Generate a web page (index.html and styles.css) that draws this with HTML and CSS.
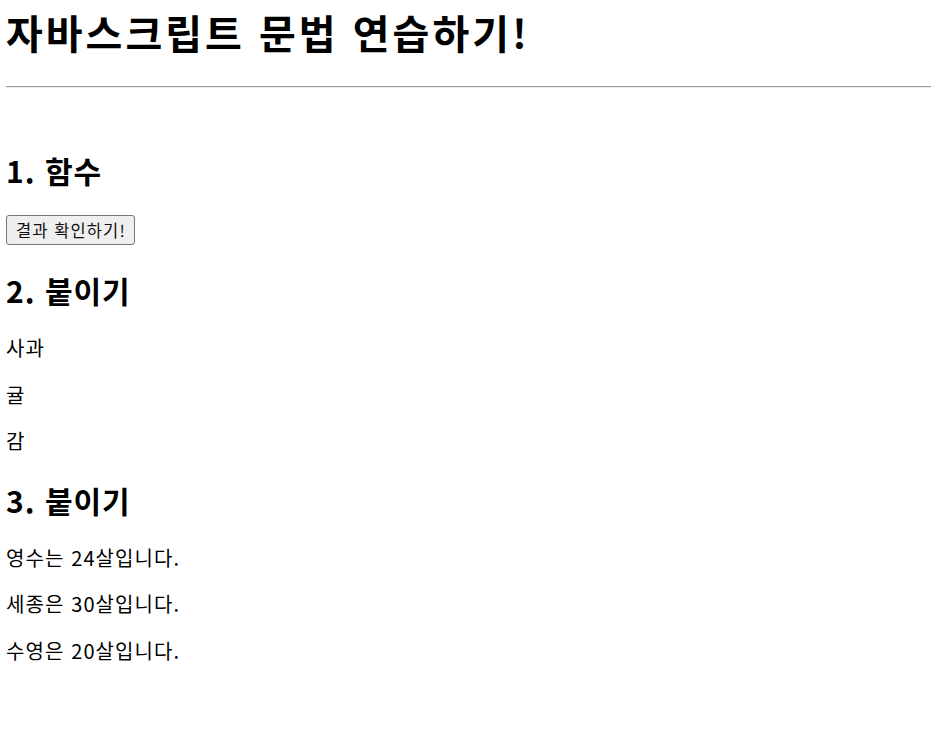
FILE: index.html
```html
<!DOCTYPE html>
<html lang="ko">
<head>
<meta charset="utf-8">
<title>자바스크립트 문법 연습하기!</title>
<link rel="stylesheet" href="styles.css">
</head>
<body>
<h1 class="title">자바스크립트 문법 연습하기!</h1>
<hr class="rule">
<section class="section section-first">
  <h2 class="heading">1. 함수</h2>
  <div class="actions"><button class="btn" type="button">결과 확인하기!</button></div>
</section>
<section class="section">
  <h2 class="heading">2. 붙이기</h2>
  <p class="item">사과</p>
  <p class="item">귤</p>
  <p class="item">감</p>
</section>
<section class="section">
  <h2 class="heading">3. 붙이기</h2>
  <p class="item">영수는 24살입니다.</p>
  <p class="item">세종은 30살입니다.</p>
  <p class="item">수영은 20살입니다.</p>
</section>
</body>
</html>
```

FILE: styles.css
```css
html, body {
  background: #ffffff;
}
body {
  margin: 0 0 0 6px;
  font-family: "Noto Sans CJK KR", "Noto Sans", sans-serif;
  font-size: 20px;
  line-height: 26.5px;
  color: #000000;
}
.title {
  font-size: 40px;
  line-height: 53px;
  font-weight: 700;
  letter-spacing: 3px;
  margin: 6px 0 27px 0;
}
.rule {
  margin: 0;
  height: 0;
  border: none;
  border-top: 1px solid #9a9a9a;
  border-bottom: 1px solid #eeeeee;
}
.section {
  margin: 0;
}
.heading {
  font-size: 30px;
  line-height: 40px;
  font-weight: 700;
  letter-spacing: 1px;
  margin: 25px 0 25px 0;
}
.section-first .heading {
  margin-top: 62px;
}
.actions {
  line-height: 26.5px;
  height: 30px;
}
.btn {
  box-sizing: border-box;
  height: 30px;
  margin: 0;
  padding: 0 8px 0 9px;
  font-family: "Noto Sans CJK KR", "Noto Sans", sans-serif;
  font-size: 16.5px;
  line-height: 26px;
  letter-spacing: 1.1px;
  color: #111111;
  background: #efefef;
  border: 1px solid #767676;
  border-radius: 3px;
  vertical-align: top;
}
.item {
  margin: 20px 0;
  line-height: 26.5px;
  letter-spacing: 1.1px;
}
```
